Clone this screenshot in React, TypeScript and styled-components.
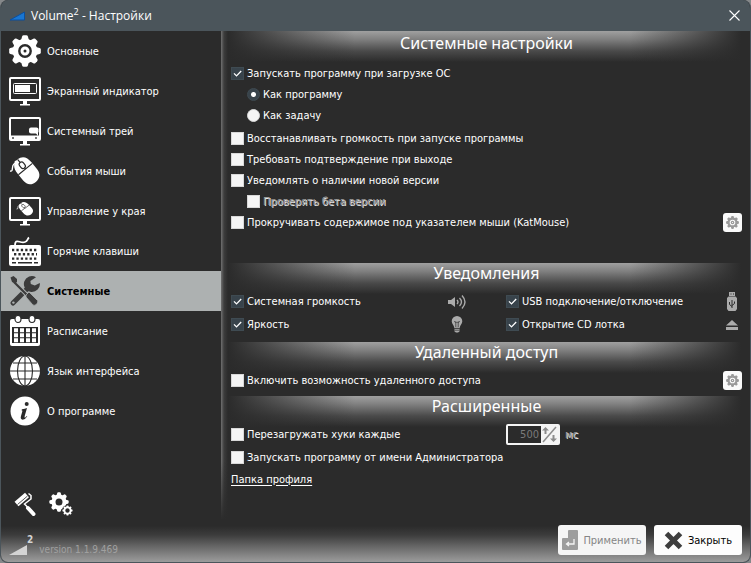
import React, { useState } from "react";
import type { ReactNode } from "react";
import styled, { createGlobalStyle, css } from "styled-components";

const ui = '"DejaVu Sans Condensed", "Noto Sans", sans-serif';
const display = '"Noto Sans", "Open Sans", sans-serif';
const dark = "#2b2b2b";
const steel = "#4b555b";

const tick =
  "url(\"data:image/svg+xml,%3Csvg xmlns='http://www.w3.org/2000/svg' viewBox='0 0 13 13'%3E%3Cpath d='M3 6.4l2.5 2.5L10.2 4' fill='none' stroke='white' stroke-width='1.3'/%3E%3C/svg%3E\")";

const Global = createGlobalStyle`
  * { box-sizing: border-box; }
  body { margin: 0; background: #85888a; font-family: ${ui}; font-size: 11px; color: #fff; }
  button, input { font: inherit; }
  svg { display: block; flex: none; }
`;

const Window = styled.div`
  min-height: 100vh;
  display: flex;
  flex-direction: column;
  background: ${dark};
  border: solid ${steel};
  border-width: 0 1px 1px;
  border-radius: 8px;
  overflow: hidden;
`;

const TitleBar = styled.header`
  height: 31px;
  flex: none;
  display: flex;
  align-items: center;
  gap: 6px;
  padding: 0 8px;
  background: ${steel};
`;

const WindowTitle = styled.h1`
  flex: 1;
  margin: 0;
  font-family: "Open Sans", "Noto Sans", sans-serif;
  font-size: 12px;
  font-weight: 400;
  line-height: 16px;
  sup { font-size: 9px; line-height: 0; }
`;

const CloseGlyph = styled.button`
  border: 0;
  padding: 2px;
  background: none;
  color: #fff;
`;

const Body = styled.div`
  flex: 1;
  display: grid;
  grid-template-columns: 220px minmax(0, 1fr);
`;

const Sidebar = styled.aside`
  display: flex;
  flex-direction: column;
  justify-content: space-between;
`;

const NavItem = styled.button<{ $active?: boolean }>`
  width: 100%;
  height: 40px;
  display: flex;
  align-items: center;
  gap: 6px;
  padding: 0 8px;
  border: 0;
  text-align: left;
  background: ${(p) => (p.$active ? "#adb1b1" : "transparent")};
  color: ${(p) => (p.$active ? "#000" : "#fff")};
  font-weight: ${(p) => (p.$active ? 700 : 400)};
  svg { color: ${(p) => (p.$active ? "#3c3c3c" : "#fff")}; }
`;

const Tools = styled.div`
  display: flex;
  gap: 12px;
  padding: 0 12px 4px;
`;

const ToolButton = styled.button`
  border: 0;
  padding: 0;
  background: none;
  color: #fff;
`;

const Pane = styled.main`
  display: flex;
  background:
    linear-gradient(to bottom, transparent 88%, ${dark} 100%),
    linear-gradient(to right, #707070 0, #3c3c3c 3px, ${dark} 7px);
`;

const Sections = styled.div`
  flex: 1;
  min-width: 0;
`;

const Section = styled.section<{ $size: "tall" | "normal" | "short" }>`
  padding: 0 8px ${(p) => ({ tall: 30, normal: 6, short: 4 })[p.$size]}px 10px;
  background:
    linear-gradient(to right, ${dark} 0, transparent 24%, transparent 76%, ${dark} 97%) 7px 0 / 100% 32px no-repeat,
    linear-gradient(to bottom, #a0a0a0 0, #818181 8px, #4a4a4a 20px, ${dark} 31px) 7px 0 / 100% 32px no-repeat;
`;

const SectionTitle = styled.h2<{ $large?: boolean }>`
  margin: 0;
  height: ${(p) => (p.$large ? 32 : 27)}px;
  line-height: ${(p) => (p.$large ? 24 : 20)}px;
  font-family: ${display};
  font-size: 16px;
  font-weight: 400;
  text-align: center;
`;

const Row = styled.div<{ $compact?: boolean; $indent?: boolean }>`
  height: ${(p) => (p.$compact ? 21 : 23)}px;
  display: flex;
  align-items: center;
  justify-content: space-between;
  padding-left: ${(p) => (p.$indent ? 16 : 0)}px;
  color: #ababab;
`;

const RadioGroup = styled.div`
  padding-bottom: 2px;
`;

const Columns = styled.div`
  display: grid;
  grid-template-columns: 1fr 1fr;
  column-gap: 39px;
`;

const embossed = css`
  color: #9a9a9a;
  text-shadow: 1px 1px 0 #e8e8e8;
`;

const Label = styled.label<{ $muted?: boolean }>`
  display: flex;
  align-items: center;
  gap: 3px;
  line-height: 17px;
  white-space: nowrap;
  color: #fff;
  ${(p) => p.$muted && embossed}
`;

const Tick = styled.input`
  appearance: none;
  width: 13px;
  height: 13px;
  margin: 0;
  flex: none;
  border: 1px solid #d8d8d8;
  background: #f5f5f5;
  &:checked { border-color: #3f4b52; background: #38434b ${tick} center / 13px no-repeat; }
`;

const Radio = styled(Tick)`
  border-radius: 50%;
  &:checked { background: radial-gradient(circle, #fff 2px, #38434b 3px); }
`;

const IconBox = styled.span`
  width: 20px;
  display: flex;
  justify-content: center;
`;

const GearButton = styled.button`
  width: 19px;
  height: 19px;
  display: grid;
  place-items: center;
  padding: 0;
  border: 0;
  border-radius: 3px;
  background: #fafafa;
  color: #9a9a9a;
`;

const Interval = styled.div`
  display: flex;
  align-items: center;
  gap: 5px;
`;

const Spin = styled.div`
  width: 54px;
  height: 21px;
  display: flex;
  border: 2px solid #f4f4f4;
  border-radius: 2px;
  background: #f4f4f4;
`;

const SpinInput = styled.input`
  flex: 1;
  min-width: 0;
  padding: 0 2px;
  border: 0;
  background: ${dark};
  color: #7a7a7a;
  text-align: right;
`;

const Unit = styled.span`
  ${embossed}
`;

const ProfileLink = styled.a`
  color: #fff;
  line-height: 16px;
  text-underline-offset: 2px;
`;

const Footer = styled.footer`
  height: 42px;
  flex: none;
  display: flex;
  align-items: center;
  gap: 8px;
  padding: 0 8px 2px;
  background: linear-gradient(to bottom, ${dark} 6px, #3c3c3c 15px, #6c6c6c 28px, #9c9c9c 42px);
`;

const Brand = styled.div`
  flex: 1;
  display: flex;
  align-items: flex-end;
  gap: 6px;
  padding-top: 9px;
  line-height: 11px;
  font-size: 10px;
  color: #a0a0a0;
`;

const Mark = styled.span`
  display: flex;
  align-items: flex-end;
  color: #d4d4d4;
  b { font-size: 10px; line-height: 10px; padding-bottom: 10px; }
`;

const Command = styled.button`
  width: 88px;
  height: 30px;
  display: flex;
  align-items: center;
  justify-content: center;
  gap: 5px;
  padding: 0;
  border: 0;
  border-radius: 3px;
  background: #fdfdfd;
  color: #000;
  &:disabled { background: #f5f5f5; color: #858585; }
`;

const angles = [0, 45, 90, 135, 180, 225, 270, 315];

const GearShape = ({ x = 16, y = 16, s = 1, hub = true }: { x?: number; y?: number; s?: number; hub?: boolean }) => (
  <g transform={`translate(${x} ${y}) scale(${s})`}>
    {angles.map((a) => (
      <path key={a} transform={`rotate(${a})`} d="M-4.2-10L-2.9-14.6Q-2.5-15.8-1.4-15.8H1.4Q2.5-15.8 2.9-14.6L4.2-10Z" fill="currentColor" />
    ))}
    <circle r="9.6" fill="none" stroke="currentColor" strokeWidth="5.400" />
    {hub && <circle r="3" fill="none" stroke="currentColor" strokeWidth="3" />}
  </g>
);

const Svg32 = ({ children }: { children: ReactNode }) => (
  <svg width="32" height="32" viewBox="0 0 32 32" aria-hidden="true">
    {children}
  </svg>
);

const Monitor = () => (
  <>
    <rect x="1" y="3" width="30" height="22" rx="1" fill="none" stroke="currentColor" strokeWidth="2" />
    <path d="M14 25h4v4h3v1.500H11V29h3z" fill="currentColor" />
  </>
);

const MouseShape = () => (
  <>
    <path d="M1 16c4 1 1-5 4-7 1.500-1 2-2 1-3" fill="none" stroke="currentColor" strokeWidth="1.4" />
    <g transform="rotate(-39 18 16)">
      <path d="M9 12C9 5 12 1 18 1s9 4 9 11v9c0 6-4 9-9 9s-9-3-9-9z" fill="currentColor" />
      <path d="M9 13.500h18M18 1v4M18 12v2" stroke={dark} strokeWidth="1.200" />
      <rect x="15.600" y="5" width="4.800" height="7" rx="2.400" fill="currentColor" stroke={dark} strokeWidth="1.200" />
    </g>
  </>
);

const GearIcon = () => <Svg32><GearShape /></Svg32>;
const IndicatorIcon = () => (
  <Svg32>
    <Monitor />
    <rect x="4.500" y="8.500" width="23" height="10" rx="1" fill="none" stroke="currentColor" />
    <path d="M6 10h15v7H6z" fill="currentColor" />
  </Svg32>
);
const TrayIcon = () => (
  <Svg32>
    <Monitor />
    <path d="M1 20.500h30V25H1z" fill="currentColor" />
    <rect x="20" y="12.500" width="9.500" height="6" rx="2" fill="currentColor" />
    <path d="M26 17h3v4z" fill="currentColor" />
    <path d="M3 22h2v2H3zM26 22h2v2h-2z" fill="#777" />
  </Svg32>
);
const MouseIcon = () => <Svg32><MouseShape /></Svg32>;
const EdgeIcon = () => (
  <Svg32>
    <Monitor />
    <g transform="translate(7 6) scale(.56 .5)"><MouseShape /></g>
  </Svg32>
);
const KeyboardIcon = () => (
  <Svg32>
    <path d="M6 11c0-9 5-2 10-4 3-1 2-3 4-4.500" fill="none" stroke="currentColor" strokeWidth="1.800" />
    <rect x="0" y="10" width="32" height="21" rx="2" fill="currentColor" />
    <g stroke={dark} strokeWidth="2.400">
      <path d="M3 15h26" strokeDasharray="2.300 2.100" />
      <path d="M5 19.300h23" strokeDasharray="2.300 2.100" />
      <path d="M3 23.600h26" strokeDasharray="2.300 2.100" />
      <path d="M3 27.700h4M9 27.700h14M25 27.700h4" strokeWidth="1.600" />
    </g>
  </Svg32>
);
const ToolsIcon = () => (
  <Svg32>
    <path d="M4 28L20 12" stroke="currentColor" strokeWidth="5" strokeLinecap="round" />
    <path d="M27 2.200A8 8 0 1 0 30.800 8l-5 2.500-4-1.500-.4-3z" fill="currentColor" />
    <circle cx="4.400" cy="27.600" r="1.200" fill="#adb1b1" />
    <path d="M5 7l14 14" stroke="#adb1b1" strokeWidth="4" />
    <path d="M5 7l14 14" stroke="currentColor" strokeWidth="2.200" />
    <path d="M1.500 2.500l3-1.500 3.500 3v3L6 8.500 3 7z" fill="currentColor" />
    <path d="M17 20l3-3 8.500 8.500q1 1.500-.5 3l-1.500 1.500q-1.500 1-3-.5L17 22z" fill="currentColor" stroke="#adb1b1" strokeWidth=".8" />
  </Svg32>
);
const CalendarIcon = () => (
  <Svg32>
    <path d="M3 4h26q2 0 2 2v23q0 2-2 2H3q-2 0-2-2V6q0-2 2-2z" fill="currentColor" />
    <path d="M3 12h26v16H3z" fill={dark} />
    <g stroke="currentColor" strokeWidth="4"><path d="M5 15.200h22M5 20.200h22M5 25.200h22" strokeDasharray="4 2" /></g>
    <g fill="currentColor" stroke={dark} strokeWidth="1.200">
      <ellipse cx="9" cy="4" rx="3" ry="3.500" /><ellipse cx="23" cy="4" rx="3" ry="3.500" />
    </g>
  </Svg32>
);
const GlobeIcon = () => (
  <Svg32>
    <circle cx="16" cy="16" r="15" fill="currentColor" />
    <g fill="none" stroke={dark} strokeWidth="1.100">
      <path d="M16 1v30M4 8h24M1 16h30M4 24h24" />
      <ellipse cx="16" cy="16" rx="7.500" ry="15" />
    </g>
  </Svg32>
);
const InfoIcon = () => (
  <Svg32>
    <circle cx="16" cy="16" r="14.500" fill="currentColor" />
    <circle cx="17.700" cy="9" r="2" fill={dark} />
    <path d="M13 14.300q3-.2 5-1.200l-2.300 8q-.5 2 .6 1.400l1.500-1.600.5.400q-2 3.400-4.700 3.400-2.600-.3-1.600-3.700l1.300-4.600q.4-1.200-1-1z" fill={dark} />
  </Svg32>
);

const items: [string, () => ReactNode][] = [
  ["Основные", GearIcon],
  ["Экранный индикатор", IndicatorIcon],
  ["Системный трей", TrayIcon],
  ["События мыши", MouseIcon],
  ["Управление у края", EdgeIcon],
  ["Горячие клавиши", KeyboardIcon],
  ["Системные", ToolsIcon],
  ["Расписание", CalendarIcon],
  ["Язык интерфейса", GlobeIcon],
  ["О программе", InfoIcon],
];

const RollerIcon = () => (
  <svg width="24" height="24" viewBox="0 0 24 24" aria-hidden="true">
    <path d="M3.500 12L14 3" stroke="currentColor" strokeWidth="6" />
    <path d="M4.500 12.500L14.500 4" stroke={dark} strokeWidth=".8" />
    <path d="M15.500 1.500l2.500 2v3.500L11.500 12l3 3" fill="none" stroke="currentColor" strokeWidth="1.500" />
    <path d="M15 16l5.500 6" stroke="currentColor" strokeWidth="4" strokeLinecap="round" />
  </svg>
);
const GearsIcon = () => (
  <svg width="24" height="24" viewBox="0 0 24 24" aria-hidden="true">
    <GearShape x={10} y={10} s={0.61} hub={false} />
    <circle cx="10" cy="10" r="5" fill="none" stroke="currentColor" strokeWidth="3" />
    <circle cx="18.500" cy="18.500" r="5.500" fill={dark} />
    <GearShape x={18.500} y={18.500} s={0.32} hub={false} />
  </svg>
);
const SmallGear = () => (
  <svg width="13" height="13" viewBox="0 0 32 32" aria-hidden="true">
    <GearShape />
  </svg>
);
const SpeakerIcon = () => (
  <svg width="20" height="16" viewBox="0 0 20 16" aria-hidden="true">
    <path d="M1 6h3l4-3v10l-4-3H1z" fill="currentColor" />
    <path d="M10 6q2 2 0 4M12.500 4q4 4 0 8M15 1.500q6 6.500 0 13" fill="none" stroke="currentColor" strokeWidth="1.400" />
  </svg>
);
const BulbIcon = () => (
  <svg width="12" height="17" viewBox="0 0 12 17" aria-hidden="true">
    <path d="M6 0a5.300 5.300 0 0 1 5.300 5.300C11.300 8 9 9 8.700 12H3.300C3 9 .7 8 .7 5.300A5.300 5.300 0 0 1 6 0z" fill="currentColor" />
    <path d="M3.500 12.500h5v3l-1.500 1H5l-1.500-1z" fill="currentColor" />
    <path d="M4.800 11V7L3.500 5.500 6 6.500l2.500-1L7.200 7v4M3.500 12.300h5M3.500 14.200h5" fill="none" stroke={dark} strokeWidth=".7" />
  </svg>
);
const UsbIcon = () => (
  <svg width="12" height="19" viewBox="0 0 12 19" aria-hidden="true">
    <path d="M3 0h6v4H3zM2.500 4.500h7L11 6v11l-1.500 2h-7L1 17V6z" fill="currentColor" />
    <path d="M6 8v8M3.500 10v2.500L6 14.500M8.500 9.500v2L6 13.500" fill="none" stroke={dark} />
    <path d="M4.500 1.500h1v1h-1zM7 1.500h1v1H7z" fill={dark} />
  </svg>
);
const EjectIcon = () => (
  <svg width="14" height="10" viewBox="0 0 14 10" aria-hidden="true">
    <path d="M7 0l6 5.500H1zM1 7h12v3H1z" fill="currentColor" />
  </svg>
);
const SpinIcon = () => (
  <svg width="17" height="17" viewBox="0 0 17 17" aria-hidden="true">
    <path d="M2 16L15 1" stroke="#8c8c8c" strokeWidth="1.500" />
    <path d="M4.500 1L8 4.500H5.500V8h-2V4.500H1zM12.500 16L9 12.500h2.500V9h2v3.500H16z" fill="#8c8c8c" />
  </svg>
);
const ApplyIcon = () => (
  <svg width="16" height="20" viewBox="0 0 16 20" aria-hidden="true">
    <path d="M7 0h8q1 0 1 1v18q0 1-1 1H1q-1 0-1-1V9q0-1 1-1h5V1q0-1 1-1z" fill="#9d9d9d" />
    <path d="M12 9v5H5M7 12l-2.500 2L7 16" fill="none" stroke="#f5f5f5" strokeWidth="1.300" />
  </svg>
);
const CrossIcon = () => (
  <svg width="19" height="19" viewBox="0 0 19 19" aria-hidden="true">
    <path d="M2.500 2.500l14 14M16.500 2.500l-14 14" stroke="#3e3e3e" strokeWidth="5" />
  </svg>
);

function Check({ label, on, muted }: { label: string; on?: boolean; muted?: boolean }) {
  return (
    <Label $muted={muted}>
      <Tick type="checkbox" defaultChecked={on} disabled={muted} />
      {label}
    </Label>
  );
}

export default function App() {
  const [mode, setMode] = useState("program");
  return (
    <>
      <Global />
      <Window>
        <TitleBar>
          <svg width="16" height="16" viewBox="0 0 16 16" aria-hidden="true">
            <path d="M1 12L15.500 4v8z" fill="#1976d2" stroke="#0b4f9e" />
          </svg>
          <WindowTitle>Volume<sup>2</sup> - Настройки</WindowTitle>
          <CloseGlyph aria-label="Закрыть окно">
            <svg width="11" height="11" viewBox="0 0 11 11" aria-hidden="true">
              <path d="M.5.5l10 10M10.500.5l-10 10" stroke="currentColor" strokeWidth="1.100" />
            </svg>
          </CloseGlyph>
        </TitleBar>
        <Body>
          <Sidebar>
            <nav>
              {items.map(([label, Icon]) => (
                <NavItem key={label} $active={label === "Системные"} aria-current={label === "Системные" ? "page" : undefined}>
                  <Icon />
                  {label}
                </NavItem>
              ))}
            </nav>
            <Tools>
              <ToolButton aria-label="Оформление"><RollerIcon /></ToolButton>
              <ToolButton aria-label="Параметры"><GearsIcon /></ToolButton>
            </Tools>
          </Sidebar>
          <Pane>
            <Sections>
              <Section $size="tall">
                <SectionTitle $large>Системные настройки</SectionTitle>
                <Row $compact><Check label="Запускать программу при загрузке ОС" on /></Row>
                <RadioGroup role="radiogroup" aria-label="Способ запуска">
                  <Row $compact $indent>
                    <Label><Radio type="radio" name="mode" checked={mode === "program"} onChange={() => setMode("program")} />Как программу</Label>
                  </Row>
                  <Row $compact $indent>
                    <Label><Radio type="radio" name="mode" checked={mode === "task"} onChange={() => setMode("task")} />Как задачу</Label>
                  </Row>
                </RadioGroup>
                <Row $compact><Check label="Восстанавливать громкость при запуске программы" /></Row>
                <Row $compact><Check label="Требовать подтверждение при выходе" /></Row>
                <Row $compact><Check label="Уведомлять о наличии новой версии" /></Row>
                <Row $compact $indent><Check label="Проверять бета версии" muted /></Row>
                <Row $compact>
                  <Check label="Прокручивать содержимое под указателем мыши (KatMouse)" />
                  <GearButton aria-label="Параметры прокрутки"><SmallGear /></GearButton>
                </Row>
              </Section>
              <Section $size="normal">
                <SectionTitle>Уведомления</SectionTitle>
                <Columns>
                  <Row><Check label="Системная громкость" on /><IconBox><SpeakerIcon /></IconBox></Row>
                  <Row><Check label="USB подключение/отключение" on /><IconBox><UsbIcon /></IconBox></Row>
                  <Row><Check label="Яркость" on /><IconBox><BulbIcon /></IconBox></Row>
                  <Row><Check label="Открытие CD лотка" on /><IconBox><EjectIcon /></IconBox></Row>
                </Columns>
              </Section>
              <Section $size="short">
                <SectionTitle>Удаленный доступ</SectionTitle>
                <Row>
                  <Check label="Включить возможность удаленного доступа" />
                  <GearButton aria-label="Параметры удаленного доступа"><SmallGear /></GearButton>
                </Row>
              </Section>
              <Section $size="normal">
                <SectionTitle>Расширенные</SectionTitle>
                <Columns>
                  <Row><Check label="Перезагружать хуки каждые" /></Row>
                  <Interval>
                    <Spin>
                      <SpinInput type="text" inputMode="numeric" aria-label="Интервал, мс" defaultValue="500" disabled />
                      <SpinIcon />
                    </Spin>
                    <Unit>мс</Unit>
                  </Interval>
                </Columns>
                <Row><Check label="Запускать программу от имени Администратора" /></Row>
                <Row $compact><ProfileLink href="#profile">Папка профиля</ProfileLink></Row>
              </Section>
            </Sections>
          </Pane>
        </Body>
        <Footer>
          <Brand>
            <Mark>
              <svg width="18" height="10" viewBox="0 0 18 10" aria-hidden="true"><path d="M0 10L18 0v10z" fill="currentColor" /></svg>
              <b>2</b>
            </Mark>
            version 1.1.9.469
          </Brand>
          <Command disabled><ApplyIcon />Применить</Command>
          <Command><CrossIcon />Закрыть</Command>
        </Footer>
      </Window>
    </>
  );
}
